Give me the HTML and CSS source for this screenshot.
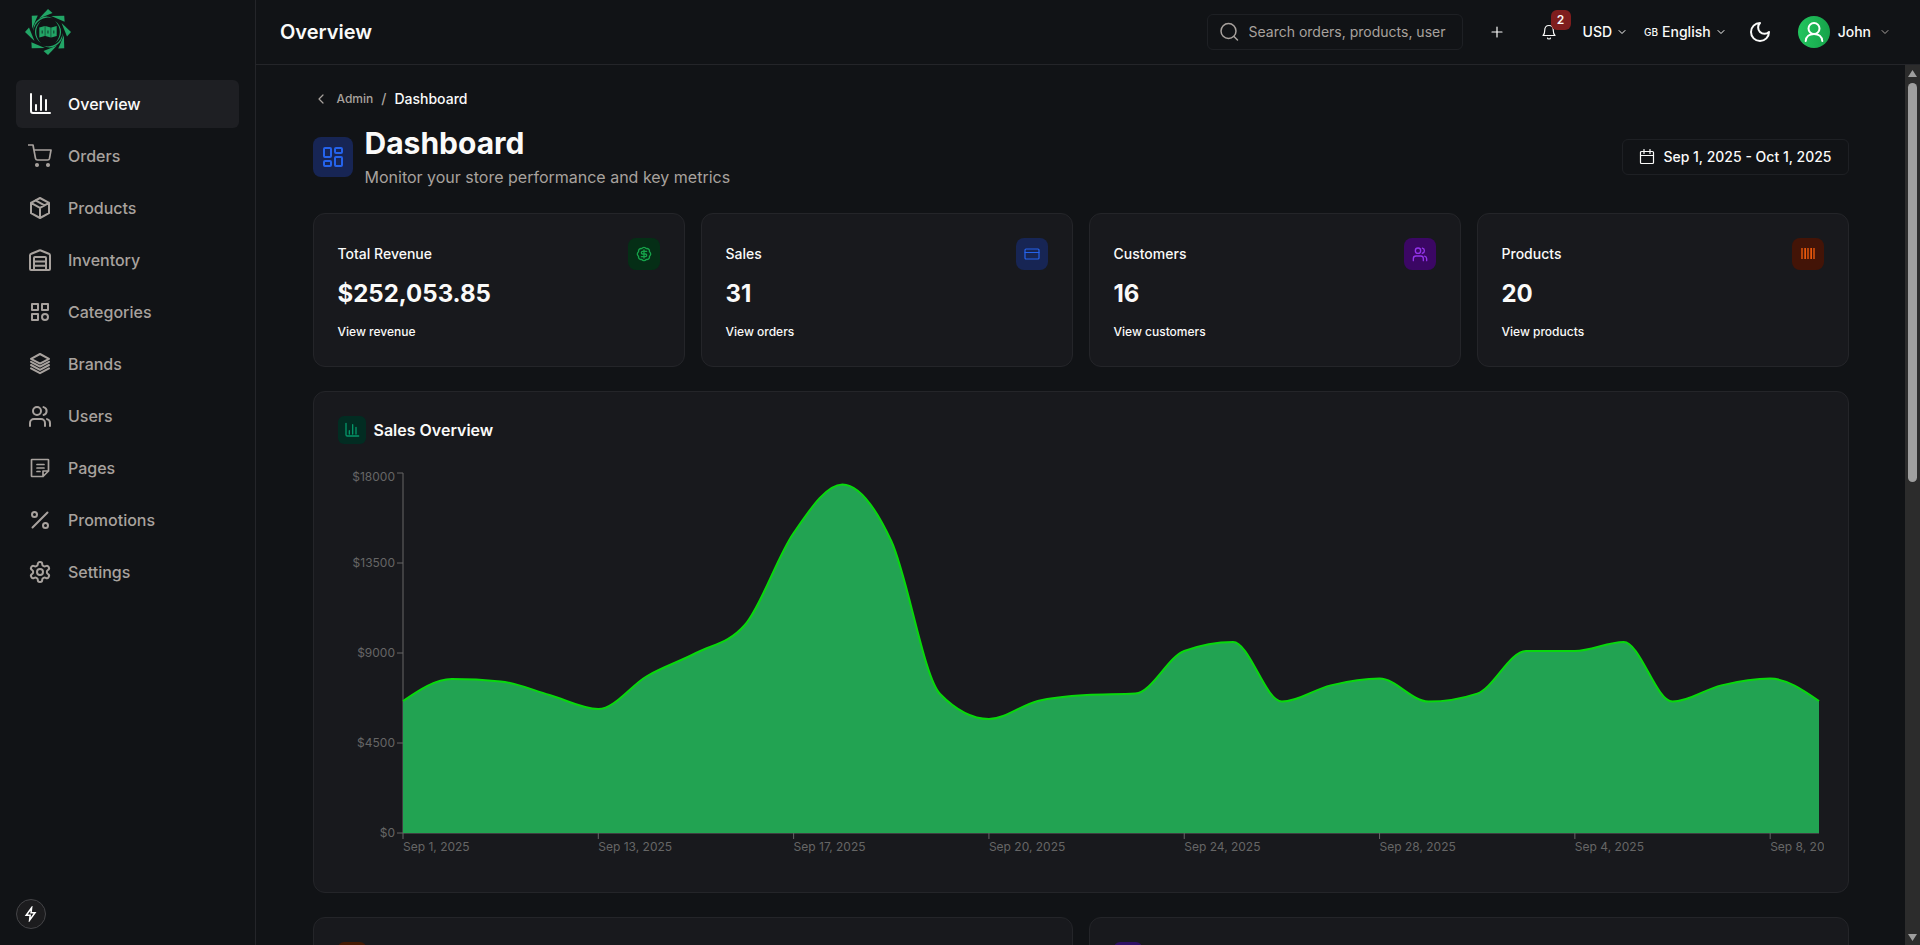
FILE: index.html
```html
<!DOCTYPE html>
<html lang="en">
<head>
<meta charset="utf-8">
<meta name="viewport" content="width=device-width, initial-scale=1">
<title>Overview</title>
<link rel="stylesheet" href="styles.css">
</head>
<body>
<div class="app">
  <aside class="sidebar">
    <a class="logo" href="#" aria-label="Home">
      <svg viewBox="-24 -24 48 48" width="48" height="48">
        <defs><path id="ray" d="M0-23 4.500-19-9-13.500z"/></defs>
        <g fill="#22a566">
          <use href="#ray"/><use href="#ray" transform="rotate(45)"/><use href="#ray" transform="rotate(90)"/><use href="#ray" transform="rotate(135)"/>
          <use href="#ray" transform="rotate(180)"/><use href="#ray" transform="rotate(225)"/><use href="#ray" transform="rotate(270)"/><use href="#ray" transform="rotate(315)"/>
          <path d="M-14.500-1A14.500 14.500 0 0 1 5-13.500 13 13 0 0 0-14.500-1zM14.500 1A14.500 14.500 0 0 1-5 13.500 13 13 0 0 0 14.500 1zM7-11A13 13 0 0 1 7 11 15 15 0 0 0 7-11zM-7 11A13 13 0 0 1-7-11 15 15 0 0 0-7 11z"/>
          <path d="M-8.700-4.500-3.200-6V4L-8.700 5.500zM-2.700-6 2.700-4.500V5.500L-2.700 4zM3.200-4.500 8.700-6V4L3.200 5.500z"/>
        </g>
        <path fill="#14573a" d="M-6.500-1.500h1.500v3h-1.500zM-.8-1.500h1.500v3h-1.500zM5-1.500h1.500v3h-1.500z"/>
      </svg>
    </a>
    <nav class="nav">
      <a class="nav-item active" href="#"><svg class="i24" viewBox="0 0 24 24"><path d="M3 2v17a2 2 0 0 0 2 2h17M8 13v5M13 4v14M18 8v10"/></svg>Overview</a>
      <a class="nav-item" href="#"><svg class="i24 thin" viewBox="0 0 24 24"><path d="M.5 1H5l2.500 13.400a2 2 0 0 0 2 1.600h10a2 2 0 0 0 2-1.600L23 6H6"/><circle cx="9" cy="21" r="1.200" fill="currentColor"/><circle cx="20" cy="21" r="1.200" fill="currentColor"/></svg>Orders</a>
      <a class="nav-item" href="#"><svg class="i24" viewBox="0 0 24 24"><path d="m12 2 9 4.800v10.400L12 22l-9-4.800V6.800zM3 6.800l9 5 9-5M12 11.800V22M7.500 4.400l9 5"/></svg>Products</a>
      <a class="nav-item" href="#"><svg class="i24" viewBox="0 0 24 24"><path d="M6 22H3a1 1 0 0 1-1-1V7.600a2 2 0 0 1 1.300-1.900l8-3.200a2 2 0 0 1 1.500 0l8 3.200A2 2 0 0 1 22 7.600V21a1 1 0 0 1-1 1h-3M6 22V10a1 1 0 0 1 1-1h10a1 1 0 0 1 1 1v12zM6 13.500h12M6 17.700h12"/></svg>Inventory</a>
      <a class="nav-item" href="#"><svg class="i24" viewBox="0 0 24 24"><path d="M4 4h6v6H4zM14 4h6v6h-6zM4 14h6v6H4z"/><circle cx="17" cy="17" r="3"/></svg>Categories</a>
      <a class="nav-item" href="#"><svg class="i24" viewBox="0 0 24 24"><path d="m12 2 9 4.800-9 4.800-9-4.800zM3 9.800l9 4.800 9-4.800M3 13l9 4.800 9-4.800M3 16.400l9 4.800 9-4.800"/></svg>Brands</a>
      <a class="nav-item" href="#"><svg class="i24" viewBox="0 0 24 24"><path d="M17 22v-3a4 4 0 0 0-4-4H6a4 4 0 0 0-4 4v3M22 22v-3a4 4 0 0 0-3-3.900M15.500 3.100a4 4 0 0 1 0 7.800"/><circle cx="9" cy="7" r="4"/></svg>Users</a>
      <a class="nav-item" href="#"><svg class="i24 thin" viewBox="0 0 24 24"><path d="M4 3.500h16a.5.5 0 0 1 .5.5v11L15 20.500H4a.5.5 0 0 1-.5-.5V4a.5.5 0 0 1 .5-.5zM15 20.500V15h5.500M9 8.500h7M9 12h7M9 15.500h3"/></svg>Pages</a>
      <a class="nav-item" href="#"><svg class="i24" viewBox="0 0 24 24"><path d="M19.500 4.500 4.500 19.500"/><circle cx="6.500" cy="6.500" r="2.500"/><circle cx="17.500" cy="17.500" r="2.500"/></svg>Promotions</a>
      <a class="nav-item" href="#"><svg class="i24" viewBox="0 0 24 24"><path d="M12.220 2h-.44a2 2 0 0 0-2 2v.18a2 2 0 0 1-1 1.730l-.43.250a2 2 0 0 1-2 0l-.15-.08a2 2 0 0 0-2.730.73l-.22.380a2 2 0 0 0 .73 2.730l.15.100a2 2 0 0 1 1 1.720v.51a2 2 0 0 1-1 1.740l-.15.090a2 2 0 0 0-.73 2.730l.22.380a2 2 0 0 0 2.730.73l.15-.08a2 2 0 0 1 2 0l.43.250a2 2 0 0 1 1 1.730V20a2 2 0 0 0 2 2h.44a2 2 0 0 0 2-2v-.18a2 2 0 0 1 1-1.730l.43-.25a2 2 0 0 1 2 0l.15.080a2 2 0 0 0 2.730-.73l.22-.39a2 2 0 0 0-.73-2.730l-.15-.08a2 2 0 0 1-1-1.740v-.5a2 2 0 0 1 1-1.740l.15-.09a2 2 0 0 0 .73-2.730l-.22-.38a2 2 0 0 0-2.730-.73l-.15.080a2 2 0 0 1-2 0l-.43-.25a2 2 0 0 1-1-1.730V4a2 2 0 0 0-2-2z"/><circle cx="12" cy="12" r="3"/></svg>Settings</a>
    </nav>
    <button class="quick" aria-label="Quick tools"><svg viewBox="0 0 16 16" width="16" height="16" fill="none" stroke="#fff" stroke-width="1.500" stroke-linejoin="miter"><path d="M8.600 1.800 3.200 9.200h4l-.6 5 5.400-7.400h-4z"/></svg></button>
  </aside>

  <div class="page">
    <header class="topbar">
      <h2 class="topbar-title">Overview</h2>
      <div class="tools">
        <label class="search">
          <svg class="i20 dim" viewBox="0 0 20 20"><circle cx="9.500" cy="9" r="7.500"/><path d="m15 14.500 3.500 3.500"/></svg>
          <input type="text" placeholder="Search orders, products, users..." aria-label="Search">
        </label>
        <button class="icon-btn add" aria-label="Add"><svg class="i16" viewBox="0 0 16 16"><path d="M8 3v10M3 8h10"/></svg></button>
        <button class="icon-btn bell" aria-label="Notifications"><svg class="i16" viewBox="0 0 16 16"><path d="M2 11.500h12c-1.300-1-1.700-2.300-1.700-5 0-3-1.400-5-4.300-5s-4.300 2-4.300 5c0 2.700-.4 4-1.700 5zM6.500 14a1.500 1 0 0 0 3 0"/></svg><span class="badge">2</span></button>
        <button class="menu">USD<svg class="i12" viewBox="0 0 12 12"><path d="m3 4.500 3 3 3-3"/></svg></button>
        <button class="menu lang"><span class="flag">GB</span>English<svg class="i12" viewBox="0 0 12 12"><path d="m3 4.500 3 3 3-3"/></svg></button>
        <button class="icon-btn theme" aria-label="Theme"><svg class="i24" viewBox="0 0 24 24"><path d="M12 3a6 6 0 0 0 9 9 9 9 0 1 1-9-9z"/></svg></button>
        <button class="menu user"><span class="avatar"><svg viewBox="0 0 32 32" width="32" height="32" fill="none" stroke="#fff" stroke-width="2" stroke-linecap="round"><circle cx="16" cy="12.500" r="5.500"/><path d="M7.700 25c.3-4.500 3.800-7 8.300-7s8 2.500 8.300 7"/></svg></span>John<svg class="i12 dim" viewBox="0 0 12 12"><path d="m3 4.500 3 3 3-3"/></svg></button>
      </div>
    </header>

    <div class="viewport">
      <main class="content">
        <div class="container">
          <nav class="crumbs" aria-label="Breadcrumb">
            <a class="back" href="#"><svg class="i16" viewBox="0 0 16 16"><path d="M10 4 6 8l4 4"/></svg>Admin</a>
            <span class="slash">/</span>
            <span class="current">Dashboard</span>
          </nav>

          <section class="heading">
            <span class="tile tile-lg blue"><svg class="i24" viewBox="0 0 24 24"><rect x="3" y="3" width="7" height="9" rx="1"/><rect x="14" y="3" width="7" height="5" rx="1"/><rect x="14" y="12" width="7" height="9" rx="1"/><rect x="3" y="16" width="7" height="5" rx="1"/></svg></span>
            <div class="heading-text"><h1>Dashboard</h1><p>Monitor your store performance and key metrics</p></div>
            <button class="range"><svg class="i16" viewBox="0 0 16 16"><rect x="1.500" y="2.500" width="13" height="12" rx="1"/><path d="M1.500 6.500h13M5 .5v4M11 .5v4"/></svg>Sep 1, 2025 - Oct 1, 2025</button>
          </section>

          <section class="stats">
            <article class="card stat"><div class="stat-head"><h3>Total Revenue</h3><span class="tile tile-md green"><svg class="i16" viewBox="0 0 24 24"><path d="M3.850 8.620a4 4 0 0 1 4.780-4.770 4 4 0 0 1 6.740 0 4 4 0 0 1 4.780 4.780 4 4 0 0 1 0 6.740 4 4 0 0 1-4.770 4.780 4 4 0 0 1-6.750 0 4 4 0 0 1-4.780-4.770 4 4 0 0 1 0-6.760zM16 8h-6a2 2 0 1 0 0 4h4a2 2 0 1 1 0 4H8M12 18V6"/></svg></span></div><p class="value">$252,053.85</p><a class="view" href="#">View revenue</a></article>
            <article class="card stat"><div class="stat-head"><h3>Sales</h3><span class="tile tile-md blue"><svg class="i16" viewBox="0 0 16 16"><rect x="1" y="3" width="14" height="10" rx="1"/><path d="M1 6.500h14"/></svg></span></div><p class="value">31</p><a class="view" href="#">View orders</a></article>
            <article class="card stat"><div class="stat-head"><h3>Customers</h3><span class="tile tile-md purple"><svg class="i16" viewBox="0 0 24 24"><path d="M17 22v-3a4 4 0 0 0-4-4H6a4 4 0 0 0-4 4v3M22 22v-3a4 4 0 0 0-3-3.900M15.500 3.100a4 4 0 0 1 0 7.800"/><circle cx="9" cy="7" r="4"/></svg></span></div><p class="value">16</p><a class="view" href="#">View customers</a></article>
            <article class="card stat"><div class="stat-head"><h3>Products</h3><span class="tile tile-md orange"><svg viewBox="0 0 16 16" width="16" height="16" fill="#ea580c"><path opacity=".7" d="M1 2h2v11H1zM7 2h2v11H7zM13 2h2v11h-2zM10 2h2v11h-2zM4 2h2v11H4z"/><path d="M5 2h1v11H5zM11 2h1v11h-1z"/></svg></span></div><p class="value">20</p><a class="view" href="#">View products</a></article>
          </section>

          <section class="card chart-card">
            <div class="card-head"><span class="tile tile-sm emerald"><svg class="i16" viewBox="0 0 24 24"><path d="M3 2v17a2 2 0 0 0 2 2h17M8 13v5M13 4v14M18 8v10"/></svg></span><h3>Sales Overview</h3></div>
            <svg class="chart" id="chart" role="img" aria-label="Sales by day"></svg>
          </section>

          <section class="pair">
            <article class="card"><div class="card-head"><span class="tile tile-sm amber"></span></div></article>
            <article class="card"><div class="card-head"><span class="tile tile-sm violet"></span></div></article>
          </section>
        </div>
      </main>
      <div class="scrollbar" aria-hidden="true">
        <svg viewBox="0 0 15 16" width="15" height="16"><path d="M7.500 5 12 12H3z"/></svg>
        <div class="track"><div class="thumb"></div></div>
        <svg viewBox="0 0 15 16" width="15" height="16"><path d="M7.500 12 12 5H3z"/></svg>
      </div>
    </div>
  </div>
</div>
<script src="chart.js"></script>
</body>
</html>
```

FILE: styles.css
```css
*, *::before, *::after { box-sizing: border-box; }

:root {
  --bg: #111316;
  --card: #18191d;
  --active: #1e1f23;
  --line: #242529;
  --line-soft: #1e2024;
  --text: #fafaf9;
  --dim: #a8a29e;
}

body {
  margin: 0;
  background: var(--bg);
  color: var(--text);
  font: 14px/20px Inter, "Liberation Sans", sans-serif;
}
h1, h2, h3, p { margin: 0; }
a { color: inherit; text-decoration: none; }
button { font: inherit; color: inherit; background: none; border: 0; padding: 0; cursor: pointer; }
svg { display: block; flex: none; }

.i24, .i20, .i16, .i12 { fill: none; stroke: currentColor; stroke-width: 2; stroke-linecap: round; stroke-linejoin: round; }
.i24 { width: 24px; height: 24px; }
.i20 { width: 20px; height: 20px; stroke-width: 1.5; }
.i16 { width: 16px; height: 16px; }
.i12 { width: 12px; height: 12px; stroke-width: 1; }
.i16[viewBox="0 0 16 16"] { stroke-width: 1.2; }
.thin { stroke-width: 1.7; }
.dim { color: var(--dim); }

.app { display: flex; height: 100vh; overflow: hidden; }

.sidebar { width: 256px; flex: none; display: flex; flex-direction: column; border-right: 1px solid var(--line); }
.logo { height: 64px; padding: 8px 24px; }
.nav { display: flex; flex-direction: column; gap: 4px; padding: 16px; flex: 1; }
.nav-item { display: flex; align-items: center; gap: 16px; height: 48px; padding: 0 12px; border-radius: 6px; font-size: 16px; font-weight: 500; color: var(--dim); }
.nav-item.active { background: var(--active); color: var(--text); }
.quick { width: 30px; height: 30px; margin: 16px; border-radius: 50%; background: #1c1c1e; border: 1px solid #444447; display: grid; place-items: center; }

.page { flex: 1; min-width: 0; display: flex; flex-direction: column; }
.topbar { height: 65px; flex: none; display: flex; align-items: center; justify-content: space-between; padding: 0 29px 0 24px; border-bottom: 1px solid var(--line); }
.topbar-title { font-size: 20px; line-height: 28px; font-weight: 600; }
.tools { display: flex; align-items: center; font-weight: 500; }
.search { display: flex; align-items: center; gap: 10px; width: 256px; height: 36px; padding: 0 16px 0 11px; border: 1px solid var(--line-soft); border-radius: 6px; }
.search input { flex: 1; min-width: 0; background: none; border: 0; outline: 0; padding: 0; color: var(--text); font: 400 14px/20px Inter, "Liberation Sans", sans-serif; }
.search input::placeholder { color: var(--dim); opacity: 1; }
.icon-btn { display: grid; place-items: center; width: 36px; height: 36px; position: relative; }
.add { margin-left: 16px; }
.bell { margin-left: 16px; }
.badge { position: absolute; top: -4px; right: -4px; width: 20px; height: 20px; border-radius: 6px; background: #7f1d1d; font-size: 12px; font-weight: 600; line-height: 20px; text-align: center; }
.menu { display: flex; align-items: center; gap: 4px; font-weight: 500; }
.bell + .menu { margin-left: 16px; }
.lang { margin-left: 16px; }
.flag { font-size: 10px; font-weight: 500; }
.theme { margin: 0 20px 0 15px; }
.user { gap: 8px; }
.avatar { border-radius: 50%; overflow: hidden; background: linear-gradient(90deg, #22c55e, #16a34a); }

.viewport { flex: 1; min-height: 0; display: flex; }
.content { flex: 1; min-width: 0; overflow: hidden; padding: 24px 32px; }
.container { max-width: 1536px; margin: 0 auto; display: flex; flex-direction: column; gap: 24px; }
.crumbs { display: flex; align-items: center; gap: 8px; height: 20px; margin-bottom: -8px; font-weight: 500; }
.back { display: flex; align-items: center; gap: 8px; font-size: 12px; color: var(--dim); }
.slash { color: var(--dim); }

.heading { display: flex; align-items: center; gap: 12px; }
.heading-text { flex: 1; display: grid; gap: 4px; }
.heading h1 { font-size: 30px; line-height: 36px; font-weight: 700; }
.heading p { font-size: 16px; line-height: 24px; color: var(--dim); }
.range { display: flex; align-items: center; gap: 8px; height: 36px; padding: 0 16px; border: 1px solid var(--line-soft); border-radius: 6px; font-weight: 500; }

.tile { display: grid; place-items: center; flex: none; border-radius: 8px; }
.tile-lg { width: 40px; height: 40px; }
.tile-md { width: 32px; height: 32px; }
.tile-sm { width: 28px; height: 28px; border-radius: 6px; }
.blue { background: #172554; color: #2563eb; }
.green { background: #052e16; color: #16a34a; }
.purple { background: #3b0764; color: #9333ea; }
.orange { background: #431407; }
.emerald { background: #022c22; color: #059669; }
.amber { background: #451a03; }
.violet { background: #2e1065; }

.card { background: var(--card); border: 1px solid var(--line); border-radius: 12px; padding: 24px; }
.stats { display: grid; grid-template-columns: repeat(4, 1fr); gap: 16px; }
.stat-head { display: flex; align-items: center; justify-content: space-between; margin-bottom: 8px; }
.stat-head h3 { font-size: 14px; font-weight: 500; }
.value { font-size: 24px; line-height: 32px; font-weight: 700; margin-bottom: 12px; }
.view { display: block; font-size: 12px; line-height: 20px; font-weight: 500; }
.card-head { display: flex; align-items: center; gap: 8px; margin-bottom: 24px; }
.card-head h3 { font-size: 16px; line-height: 24px; font-weight: 600; }
.chart { width: 100%; height: 400px; overflow: hidden; }
.chart text { font-size: 12px; fill: #666; }
.chart .axis { stroke: #666; stroke-width: 1; fill: none; }
.chart .area { fill: #22a352; }
.chart .curve { fill: none; stroke: #08d90c; stroke-width: 2; }
.pair { display: grid; grid-template-columns: repeat(2, 1fr); gap: 16px; }

.scrollbar { width: 15px; flex: none; display: flex; flex-direction: column; background: #2c2c2c; }
.scrollbar svg { fill: #9f9f9f; }
.track { flex: 1; padding: 2px 3px; }
.thumb { height: 47.3%; border-radius: 5px; background: #9f9f9f; }
```

FILE: chart.js
```js
const sales = [
  6600, 7700, 7580, 6900, 6200, 7850, 9000, 10400, 15000, 17430,
  14600, 6950, 5700, 6600, 6900, 6970, 9100, 9550, 6570, 7380,
  7720, 6570, 6970, 9100, 9100, 9550, 6570, 7380, 7720, 6600
];
const dates = ['Sep 1, 2025', 'Sep 13, 2025', 'Sep 17, 2025', 'Sep 20, 2025',
  'Sep 24, 2025', 'Sep 28, 2025', 'Sep 4, 2025', 'Sep 8, 2025'];
const chart = document.getElementById('chart');

// Monotone cubic interpolation through the points.
function curve(p) {
  const n = p.length;
  const s = [];
  for (let i = 0; i < n - 1; i++) s.push((p[i + 1][1] - p[i][1]) / (p[i + 1][0] - p[i][0]));
  const t = new Array(n);
  for (let i = 1; i < n - 1; i++) {
    const avg = (s[i - 1] + s[i]) / 2;
    t[i] = (Math.sign(s[i - 1]) + Math.sign(s[i])) *
      Math.min(Math.abs(s[i - 1]), Math.abs(s[i]), Math.abs(avg) / 2) || 0;
  }
  t[0] = (3 * s[0] - t[1]) / 2;
  t[n - 1] = (3 * s[n - 2] - t[n - 2]) / 2;
  let d = `M${p[0]}`;
  for (let i = 0; i < n - 1; i++) {
    const h = (p[i + 1][0] - p[i][0]) / 3;
    d += `C${p[i][0] + h},${p[i][1] + h * t[i]},${p[i + 1][0] - h},${p[i + 1][1] - h * t[i + 1]},${p[i + 1]}`;
  }
  return d;
}

function draw() {
  const left = 65, top = 5, bottom = 365;
  const right = Math.round(chart.getBoundingClientRect().width) - 5;
  const step = (right - left) / (sales.length - 1);
  const y = v => bottom - (v / 18000) * (bottom - top);
  const line = curve(sales.map((v, i) => [left + i * step, y(v)]));
  let out = `<path class="axis" d="M${left},${bottom}H${right}M${left},${top}V${bottom}"/>`;
  [0, 4500, 9000, 13500, 18000].forEach(v => {
    const labelY = Math.max(y(v), 9);
    out += `<path class="axis" d="M${left - 6},${y(v)}H${left}"/>`;
    out += `<text x="${left - 8}" y="${labelY}" dy="0.355em" text-anchor="end">$${v}</text>`;
  });
  dates.forEach((label, i) => {
    const x = left + i * 4 * step;
    out += `<path class="axis" d="M${x},${bottom}v6"/>`;
    out += `<text x="${x}" y="${bottom + 9}" dy="0.71em">${label}</text>`;
  });
  out += `<path class="area" d="${line}V${bottom}H${left}Z"/><path class="curve" d="${line}"/>`;
  chart.innerHTML = out;
}

draw();
window.addEventListener('resize', draw);
```
